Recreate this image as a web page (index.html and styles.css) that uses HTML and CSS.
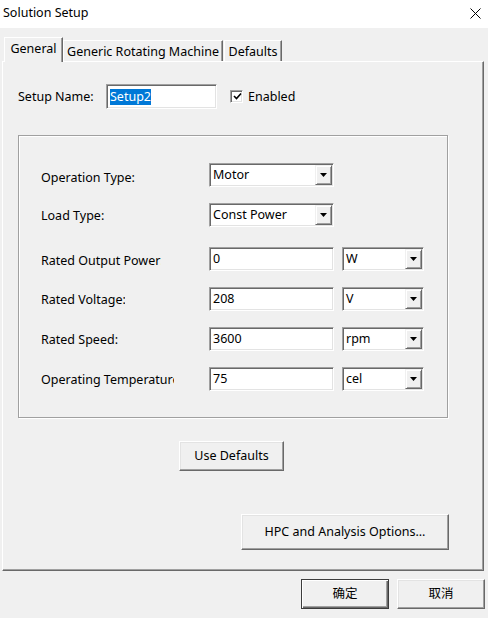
FILE: index.html
```html
<!DOCTYPE html>
<html>
<head>
<meta charset="utf-8">
<title>Solution Setup</title>
<link rel="stylesheet" href="styles.css">
</head>
<body>
<div class="window">
  <div class="titlebar">
    <span class="title">Solution Setup</span>
    <svg class="close" width="11" height="11" viewBox="0 0 11 11"><path d="M0.5 0.5L10.5 10.5M10.5 0.5L0.5 10.5" stroke="#000" stroke-width="1" fill="none"/></svg>
  </div>
  <div class="body">
    <div class="tabs">
      <div class="tab tab-active">General</div>
      <div class="tab tab-wide">Generic Rotating Machine</div>
      <div class="tab tab-last">Defaults</div>
    </div>
    <div class="panel">
      <div class="setup-row">
        <span class="setup-label">Setup Name:</span>
        <div class="field setup-field"><span class="selected">Setup2</span></div>
        <span class="checkbox"><svg width="9" height="9" viewBox="0 0 9 9"><path d="M1 4L3.5 6.5L8 1.5" stroke="#000" stroke-width="1.6" fill="none"/></svg></span>
        <span class="check-label">Enabled</span>
      </div>
      <div class="group">
        <div class="row row-first">
          <span class="label label-low">Operation Type:</span>
          <div class="field combo"><span class="combo-text">Motor</span><span class="arrow-btn"><svg width="7" height="4" viewBox="0 0 7 4"><path d="M0 0H7L3.5 4Z" fill="#000"/></svg></span></div>
        </div>
        <div class="row">
          <span class="label">Load Type:</span>
          <div class="field combo"><span class="combo-text">Const Power</span><span class="arrow-btn"><svg width="7" height="4" viewBox="0 0 7 4"><path d="M0 0H7L3.5 4Z" fill="#000"/></svg></span></div>
        </div>
        <div class="row row-wide-gap">
          <span class="label label-mid"><span class="clip clip-power">Rated Output Power:</span></span>
          <div class="field input">0</div>
          <div class="field combo unit"><span class="combo-text">W</span><span class="arrow-btn"><svg width="7" height="4" viewBox="0 0 7 4"><path d="M0 0H7L3.5 4Z" fill="#000"/></svg></span></div>
        </div>
        <div class="row">
          <span class="label"><span class="clip clip-voltage">Rated Voltage:</span></span>
          <div class="field input">208</div>
          <div class="field combo unit"><span class="combo-text">V</span><span class="arrow-btn"><svg width="7" height="4" viewBox="0 0 7 4"><path d="M0 0H7L3.5 4Z" fill="#000"/></svg></span></div>
        </div>
        <div class="row">
          <span class="label">Rated Speed:</span>
          <div class="field input">3600</div>
          <div class="field combo unit"><span class="combo-text">rpm</span><span class="arrow-btn"><svg width="7" height="4" viewBox="0 0 7 4"><path d="M0 0H7L3.5 4Z" fill="#000"/></svg></span></div>
        </div>
        <div class="row">
          <span class="label"><span class="clip clip-temp">Operating Temperature</span></span>
          <div class="field input">75</div>
          <div class="field combo unit"><span class="combo-text">cel</span><span class="arrow-btn"><svg width="7" height="4" viewBox="0 0 7 4"><path d="M0 0H7L3.5 4Z" fill="#000"/></svg></span></div>
        </div>
      </div>
      <div class="defaults-row"><button class="btn btn-defaults">Use Defaults</button></div>
      <div class="hpc-row"><button class="btn btn-hpc">HPC and Analysis Options...</button></div>
    </div>
    <div class="footer">
      <button class="btn btn-footer btn-default">确定</button>
      <button class="btn btn-footer">取消</button>
    </div>
  </div>
</div>
</body>
</html>
```

FILE: styles.css
```css
* { box-sizing: border-box; }
html, body { margin: 0; padding: 0; }
body {
  width: 488px;
  height: 618px;
  background: #f0f0f0;
  font-family: "Noto Sans", "Noto Sans CJK SC", sans-serif;
  font-size: 12.5px;
  color: #000;
  overflow: hidden;
}
.window { width: 488px; height: 618px; display: flex; flex-direction: column; }

.titlebar {
  height: 28px;
  background: #fff;
  display: flex;
  align-items: center;
  justify-content: space-between;
  padding: 0 7px 2px 3px;
  flex-shrink: 0;
}
.title { font-size: 12.5px; line-height: 16px; }
.close { display: block; margin-top: 1px; }

.body { display: flex; flex-direction: column; }

.tabs {
  display: flex;
  align-items: flex-end;
  height: 25px;
  margin-top: 9px;
  padding-left: 4px;
  position: relative;
  z-index: 2;
  margin-bottom: -1px;
}
.tab {
  height: 21px;
  margin-bottom: 1px;
  display: flex;
  align-items: center;
  justify-content: center;
  border-top: 1px solid #fff;
  border-left: 1px solid #fff;
  border-right: 1px solid #696969;
  box-shadow: inset -1px 0 0 #a0a0a0;
  background: #f0f0f0;
  width: 58px;
  padding-top: 1px;
  line-height: 16px;
  white-space: nowrap;
}
.tab-active {
  height: 25px;
  margin-bottom: 0;
  width: 59px;
  padding-top: 0;
  padding-bottom: 2px;
}
.tab-wide { width: 160px; }
.tab-last { margin-left: 1px; }

.panel {
  margin-left: 2px;
  width: 482px;
  height: 510px;
  border-top: 1px solid #fff;
  border-left: 1px solid #fff;
  border-right: 1px solid #696969;
  border-bottom: 1px solid #696969;
  box-shadow: inset -1px -1px 0 #a0a0a0;
  padding-left: 15px;
  display: flex;
  flex-direction: column;
  position: relative;
  z-index: 1;
}

.setup-row {
  margin-top: 22px;
  height: 25px;
  display: flex;
  align-items: center;
}
.setup-label { width: 88px; line-height: 16px; padding-top: 1px; white-space: nowrap; }

.field {
  height: 24px;
  background: #fff;
  border: 1px solid;
  border-color: #a0a0a0 #fff #fff #a0a0a0;
  box-shadow: inset 1px 1px 0 #696969, inset -1px -1px 0 #e3e3e3;
  display: flex;
  align-items: center;
  line-height: 16px;
  white-space: nowrap;
}
.setup-field { width: 111px; height: 25px; padding-left: 3px; }
.selected { background: #0078d7; color: #fff; line-height: 16px; }

.checkbox {
  width: 13px;
  height: 13px;
  margin-left: 13px;
  background: #fff;
  border: 1px solid;
  border-color: #a0a0a0 #fff #fff #a0a0a0;
  box-shadow: inset 1px 1px 0 #696969, inset -1px -1px 0 #e3e3e3;
  display: flex;
  align-items: center;
  justify-content: center;
}
.checkbox svg { display: block; margin-left: 1px; }
.check-label { margin-left: 5px; line-height: 16px; }

.group {
  margin-top: 26px;
  width: 430px;
  height: 283px;
  border: 1px solid #a0a0a0;
  box-shadow: inset 1px 1px 0 #fff, 1px 1px 0 #fff;
  padding: 27px 0 0 22px;
  display: flex;
  flex-direction: column;
}
.row {
  height: 24px;
  display: flex;
  align-items: flex-start;
  margin-top: 16px;
}
.row-first { margin-top: 0; }
.row-wide-gap { margin-top: 20px; }
.label {
  width: 168px;
  flex-shrink: 0;
  line-height: 16px;
  padding-top: 5px;
  white-space: nowrap;
}
.label-low { padding-top: 7px; }
.label-mid { padding-top: 6px; }
.clip { display: inline-block; overflow: hidden; vertical-align: top; }
.clip-power { width: 120px; }
.clip-voltage { width: 84px; }
.clip-temp { width: 133px; }

.input { width: 125px; padding-left: 3px; }
.combo { width: 125px; padding: 1px; align-items: stretch; }
.combo-text { flex: 1; display: flex; align-items: center; padding-left: 2px; }
.unit { width: 82px; margin-left: 8px; }
.arrow-btn {
  width: 17px;
  background: #f0f0f0;
  border: 1px solid;
  border-color: #f0f0f0 #696969 #696969 #f0f0f0;
  box-shadow: inset 1px 1px 0 #fff, inset -1px -1px 0 #a0a0a0;
  display: flex;
  align-items: center;
  justify-content: center;
}
.arrow-btn svg { display: block; }

.btn {
  font-family: "Noto Sans", "Noto Sans CJK SC", sans-serif;
  font-size: 12.5px;
  color: #000;
  background: #f0f0f0;
  border: 1px solid;
  border-color: #fff #696969 #696969 #fff;
  box-shadow: inset -1px -1px 0 #a0a0a0, inset 1px 1px 0 #e3e3e3;
  padding: 0;
  line-height: 16px;
  display: flex;
  align-items: center;
  justify-content: center;
  white-space: nowrap;
}
.defaults-row { margin-top: 23px; display: flex; }
.btn-defaults { width: 105px; height: 30px; margin-left: 161px; }
.hpc-row { margin-top: 43px; display: flex; }
.btn-hpc { width: 208px; height: 36px; margin-left: 223px; }

.footer {
  display: flex;
  justify-content: flex-end;
  gap: 8px;
  padding-top: 8px;
  padding-right: 3px;
}
.btn-footer { width: 88px; height: 30px; }
.btn-default {
  border: 1px solid #3c3c3c;
  box-shadow: inset 1px 1px 0 #fff, inset -1px -1px 0 #696969, inset -2px -2px 0 #a0a0a0;
}
```
